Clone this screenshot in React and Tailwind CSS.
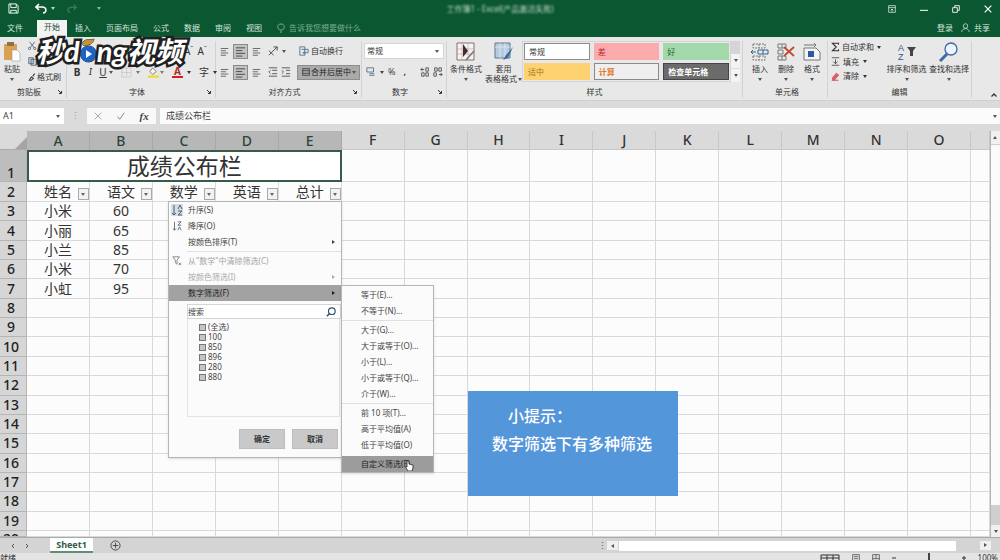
/**
 * App.jsx
 * Spreadsheet window: ribbon, formula bar, sheet grid and the open filter menu.
 */

import React from 'react'

const COLUMNS = ['A', 'B', 'C', 'D', 'E', 'F', 'G', 'H', 'I', 'J', 'K', 'L', 'M', 'N', 'O', '']
const HEADINGS = ['姓名', '语文', '数学', '英语', '总计']
const SCORES = [
  ['小米', '60'],
  ['小丽', '65'],
  ['小兰', '85'],
  ['小米', '70'],
  ['小虹', '95'],
]
const ROWS = Array.from({ length: 18 }, (_, i) => i + 3)
const TABS = ['插入', '页面布局', '公式', '数据', '审阅', '视图']
const FILTER_VALUES = ['100', '850', '896', '280', '880']

const SUBMENU = [
  ['等于(E)...', '不等于(N)...'],
  ['大于(G)...', '大于或等于(O)...', '小于(L)...', '小于或等于(Q)...', '介于(W)...'],
  ['前 10 项(T)...', '高于平均值(A)', '低于平均值(O)'],
]

function Caret({ className = 'text-[#555]' }) {
  return (
    <svg viewBox="0 0 4 3" className={`w-1 h-[3px] shrink-0 ${className}`}>
      <path d="M0 0h4L2 3z" fill="currentColor" />
    </svg>
  )
}

function Icon({ children, className = 'w-3 h-3', box = '0 0 12 12' }) {
  return (
    <svg viewBox={box} className={`shrink-0 ${className}`} fill="none" stroke="currentColor" strokeWidth="1">
      {children}
    </svg>
  )
}

/* Ribbon section with its caption underneath */
function Group({ label, launcher, className, children }) {
  return (
    <section className={`flex flex-col shrink-0 border-r border-[#d2d2d2] ${className}`}>
      <div className="flex h-11">{children}</div>
      <div className="flex items-center h-3 mt-px">
        <span className="flex-1 text-center">{label}</span>
        {launcher && (
          <Icon className="w-1 h-1 mr-1" box="0 0 4 4">
            <path d="M0 0l3 3M3.5 1v2.5H1" />
          </Icon>
        )}
      </div>
    </section>
  )
}

function BigButton({ lines, className, children }) {
  return (
    <button className={`flex flex-col items-center shrink-0 ${className}`}>
      <span className="flex items-center justify-center h-[22px]">{children}</span>
      <span className="h-[10px] mt-px whitespace-nowrap">{lines[0]}</span>
      <span className="flex items-center gap-px h-[10px] whitespace-nowrap">{lines[1]}<Caret /></span>
    </button>
  )
}

function AlignIcon({ active, small }) {
  return (
    <button className={active ? 'bg-[#c3c3c3] border border-[#8a8a8a] p-px' : 'p-px'}>
      <Icon className={small ? 'w-[9px] h-[9px]' : 'w-[11px] h-[11px]'}>
        <path d="M1 2h10M1 5h7M1 8h10M1 11h7" />
      </Icon>
    </button>
  )
}

function TitleBar() {
  return (
    <header className="flex items-center h-[18px] pb-px text-white">
      <div className="flex flex-1 items-center pl-2">
        <Icon className="w-[11px] h-[11px]">
          <path d="M1 1h8l2 2v8H1zM3 1v4h6V1M3 11V8h6v3" />
        </Icon>
        <Icon className="w-3 h-3 ml-4">
          <path d="M4 1L1 4l3 3M1 4h6c5 0 5 6 1 6" strokeWidth="1.6" />
        </Icon>
        <Caret className="ml-1 text-[#b9d2c5]" />
        <Icon className="w-[10px] h-[10px] ml-3 opacity-20">
          <path d="M8 1l3 3-3 3M11 4H5C0 4 0 10 4 10" strokeWidth="1.6" />
        </Icon>
        <Caret className="ml-5 text-[#8db39f]" />
      </div>
      <span className="text-[8px] leading-3 text-[#c4dbce] blur-[1px]">工作簿1 - Excel(产品激活失败)</span>
      <div className="flex flex-1 items-center justify-end gap-5 pr-2">
        <Icon className="w-2 h-2"><path d="M1 1h10v10H1zM1 4h10M6 10V6M4 8l2-2 2 2" /></Icon>
        <Icon className="w-2 h-2 ml-1"><path d="M0 8h12" strokeWidth="1.5" /></Icon>
        <Icon className="w-2 h-2 ml-1"><path d="M1 4h7v7H1zM4 4V1h7v7H8" strokeWidth="1.3" /></Icon>
        <Icon className="w-2 h-2 ml-1"><path d="M1 1l10 10M11 1L1 11" strokeWidth="1.8" /></Icon>
      </div>
    </header>
  )
}

function Tabs() {
  return (
    <nav className="flex h-[19px] text-[8px] leading-[18px] text-[#d5e5dc]">
      <button className="w-[37px] pl-[7px] text-left">文件</button>
      <button className="px-[7px] mt-[2px] pb-1 bg-[#f3f3f3] text-[#174f34] leading-3">开始</button>
      <div className="flex gap-px pl-px">
        {TABS.map((tab) => (
          <button key={tab} className="px-[7px]">{tab}</button>
        ))}
      </div>
      <button className="flex items-center gap-1 ml-2 text-[#7fae95]">
        <Icon className="w-2 h-[10px]" box="0 0 8 10">
          <path d="M2.5 7C0 5 0 1 4 1s4 4 1.500 6zM3 9h2" />
        </Icon>
        告诉我您想要做什么
      </button>
      <div className="flex items-center ml-auto pr-[10px]">
        <button>登录</button>
        <button className="flex items-center gap-1 ml-2">
          <Icon className="w-[9px] h-[9px]">
            <circle cx="6" cy="4" r="3" />
            <path d="M1 12c0-6 10-6 10 0" />
          </Icon>
          共享
        </button>
      </div>
    </nav>
  )
}

function ClipboardGroup() {
  return (
    <Group label="剪贴板" launcher className="w-[67px]">
      <BigButton lines={['粘贴']} className="w-6">
        <svg viewBox="0 0 18 22" className="w-[18px] h-[22px]">
          <rect x="1" y="3" width="13" height="16" rx="1" fill="#dba052" />
          <rect x="4" y="1" width="7" height="4" fill="#8a7350" />
          <path d="M9 9h5l3 3v8H9z" fill="#fff" stroke="#999" strokeWidth=".6" />
        </svg>
      </BigButton>
      <div className="flex flex-col justify-between pl-1 pb-[3px] text-[#3f5368]">
        <Icon className="w-[9px] h-[9px]"><path d="M2 1l6 8M9 1L3 9" /><circle cx="2" cy="10" r="1.500" /><circle cx="9" cy="10" r="1.500" /></Icon>
        <Icon className="w-[9px] h-[9px]"><path d="M1 1h6v8H1zM4 3h7v8H4z" fill="#c9d6e2" /></Icon>
        <button className="flex items-center gap-px text-[#333]">
          <Icon className="w-2 h-2"><path d="M2 11l3-5 3 2-3 3zM7 5l3-4" strokeWidth="1.600" /></Icon>
          格式刷
        </button>
      </div>
    </Group>
  )
}

function FontGroup() {
  return (
    <Group label="字体" launcher className="w-[149px]">
      <div className="flex flex-col flex-1 pl-[3px]">
        <div className="flex items-center justify-end gap-1 h-5 pr-[10px] text-[10px]">
          <button>A<sup>ˆ</sup></button>
          <button>A<sup>ˇ</sup></button>
        </div>
        <div className="flex items-center h-[22px] text-[10px]">
          <button className="w-[14px] font-bold">B</button>
          <button className="w-[13px] italic font-serif">I</button>
          <button className="w-3 underline">U</button>
          <Caret />
          <Icon className="w-[11px] h-[11px] ml-2 text-[#b0b0b0]"><path d="M1 1h10v10H1zM6 1v10M1 6h10" strokeDasharray="1 1" /></Icon>
          <Caret className="ml-1 text-[#777]" />
          <svg viewBox="0 0 12 12" className="w-[11px] h-[11px] ml-2">
            <path d="M5 1l4 4-4 3-3-3z" fill="#fff" stroke="#555" strokeWidth=".8" />
            <rect y="9" width="12" height="3" fill="#f0dc4a" />
          </svg>
          <Caret className="ml-px text-[#777]" />
          <button className="w-[11px] ml-2 h-[11px] leading-[9px] font-bold border-b-2 border-[#d02020] text-[#b02a2a]">A</button>
          <Caret className="ml-1" />
          <button className="ml-2">字</button>
          <Caret className="ml-1" />
        </div>
      </div>
    </Group>
  )
}

function AlignmentGroup() {
  return (
    <Group label="对齐方式" launcher className="w-[146px]">
      <div className="flex flex-col flex-1 pl-[3px] text-[#444]">
        <div className="flex items-center gap-[3px] h-5">
          <AlignIcon small />
          <AlignIcon active />
          <AlignIcon small />
          <Icon className="w-[11px] h-[11px] ml-[3px]"><path d="M1 10l9-9M6 1h4v4M1 5l5 5" /></Icon>
          <Caret />
          <button className="flex items-center gap-[2px] ml-[10px] text-[#333]">
            <Icon className="w-[10px] h-[10px] text-[#456b8a]"><path d="M1 1h6v10H1zM3 4h8v4H5M7 6L5 8l2 2" /></Icon>
            自动换行
          </button>
        </div>
        <div className="flex items-center gap-[3px] h-[22px]">
          <AlignIcon small />
          <AlignIcon active />
          <AlignIcon small />
          <Icon className="w-[10px] h-[10px] ml-[3px]"><path d="M1 1h10M5 4h6M5 8h6M1 11h10M3 4L1 6l2 2" /></Icon>
          <Icon className="w-[10px] h-[10px]"><path d="M1 1h10M6 4h5M6 8h5M1 11h10M1 4l2 2-2 2" /></Icon>
          <button className="flex items-center justify-between h-[15px] w-[63px] pl-1 pr-[3px] ml-auto mr-px bg-[#aaaaaa] border border-[#8e8e8e] text-[#222]">
            <Icon className="w-2 h-2"><path d="M1 1h10v10H1zM1 4h10M1 8h10" /></Icon>
            合并后居中
            <Caret />
          </button>
        </div>
      </div>
    </Group>
  )
}

function NumberGroup() {
  return (
    <Group label="数字" launcher className="w-[85px]">
      <div className="flex flex-col flex-1 px-[2px]">
        <div className="flex items-center shrink-0 h-4 w-full mt-[2px] bg-white border border-[#d5d5d5] pr-1">
          <select aria-label="数字格式" className="flex-1 appearance-none outline-none pl-[2px]">
            <option>常规</option>
          </select>
          <Caret />
        </div>
        <div className="flex items-center h-[26px] pl-[2px] text-[9px] text-[#444]">
          <Icon className="w-[10px] h-[10px] text-[#456b8a]"><path d="M1 1h8v5H1zM4 8h6M4 10h6" /></Icon>
          <Caret className="ml-1" />
          <button className="ml-1">%</button>
          <button className="ml-2 font-bold">,</button>
          <Icon className="w-[10px] h-[10px] ml-[14px]"><path d="M5 3H1M3 1L1 3l2 2M7 1h3v4H7zM2 7h3v4H2zM7 7h3v4H7z" /></Icon>
          <Icon className="w-[10px] h-[10px] ml-[3px]"><path d="M7 9h4M9 7l2 2-2 2M1 7h3v4H1zM2 1h3v4H2zM7 1h3v4H7z" /></Icon>
        </div>
      </div>
    </Group>
  )
}

function StylesGroup() {
  return (
    <Group label="样式" className="w-[296px]">
      <BigButton lines={['条件格式']} className="w-[38px]">
        <svg viewBox="0 0 20 20" className="w-5 h-5">
          <path d="M1 1h17v17H1z" fill="#f8f2f2" stroke="#777" />
          <path d="M6 1v17M12 1v17M1 7h17M1 12h17" stroke="#c99" strokeWidth=".6" />
          <path d="M7 2l5 7-5 6z" fill="#333" />
          <path d="M10 18l8-9" stroke="#777" strokeWidth="1.500" />
        </svg>
      </BigButton>
      <BigButton lines={['套用', '表格格式']} className="w-[37px]">
        <svg viewBox="0 0 20 20" className="w-5 h-5">
          <path d="M1 1h15v15H1z" fill="#b7cbe0" stroke="#5f7890" />
          <path d="M1 5h15M6 1v15M11 1v15" stroke="#e8eef5" strokeWidth=".7" />
          <path d="M19 5l-7 8-3 5 5-2z" fill="#3e6a9c" />
        </svg>
      </BigButton>
      <div className="grid grid-cols-3 grid-rows-2 gap-x-1 gap-y-[3px] flex-1 h-[41px] p-px border border-[#d4d4d4] text-left [&>button]:pl-1 [&>button]:text-left">
        <button className="bg-white border border-[#8d8d8d] text-[#333]">常规</button>
        <button className="bg-[#fbabab] text-[#b8252c]">差</button>
        <button className="bg-[#a3d8ab] text-[#1c6b2c]">好</button>
        <button className="bg-[#ffd271] text-[#a9711a]">适中</button>
        <button className="bg-[#efefef] border border-[#8a8a8a] text-[#e07a2c] font-bold">计算</button>
        <button className="bg-[#6b6b6b] border border-[#444] text-white font-bold">检查单元格</button>
      </div>
      <div className="flex flex-col w-[9px] h-[41px] mr-[2px] bg-[#f3f3f3]">
        <span className="flex-1 bg-[#d8d3d8]" />
        <button className="flex flex-1 items-center justify-center" aria-label="向下"><Caret /></button>
        <button className="flex flex-1 items-center justify-center border-t border-[#ddd]" aria-label="更多"><Caret /></button>
      </div>
    </Group>
  )
}

function CellsGroup() {
  return (
    <Group label="单元格" className="w-[85px] pl-1">
      <BigButton lines={['插入']} className="w-[26px]">
        <Icon className="w-[18px] h-[18px] text-[#777]" box="0 0 18 18">
          <path d="M2 1h12v4H2zM8 1v4M2 13h12v4H2zM8 13v4" strokeDasharray="2 1" />
          <path d="M7 7h10v4H7zM12 7v4M5 9H0M2 7L0 9l2 2" stroke="#35608c" />
        </Icon>
      </BigButton>
      <BigButton lines={['删除']} className="w-[26px]">
        <Icon className="w-[18px] h-[18px] text-[#777]" box="0 0 18 18">
          <path d="M1 1h8v4H1zM5 1v4M1 7h5v4H1zM1 13h8v4H1zM5 13v4" />
          <path d="M7 4l10 9M17 4L7 13" stroke="#bd4a33" strokeWidth="1.800" />
        </Icon>
      </BigButton>
      <BigButton lines={['格式']} className="w-[26px]">
        <Icon className="w-[18px] h-[18px] text-[#777]" box="0 0 18 18">
          <path d="M1 2h12M11 0l2 2-2 2M1 5h12l4 4v8H1z" fill="#f4f4f4" />
          <path d="M5 8h6v6H5z" fill="#2c5aa0" stroke="none" />
        </Icon>
      </BigButton>
    </Group>
  )
}

function EditingGroup() {
  return (
    <Group label="编辑" className="w-[144px]">
      <div className="flex flex-col justify-between pl-[3px] pb-[3px] w-[57px]">
        <button className="flex items-center gap-[2px] h-3">
          <Icon className="w-[9px] h-[10px]"><path d="M10 3V1H2l5 5-5 5h8V9" strokeWidth="1.500" /></Icon>
          自动求和<Caret className="ml-px" />
        </button>
        <button className="flex items-center gap-[3px] h-3">
          <Icon className="w-[9px] h-[9px]"><path d="M1 1h10M1 11h10M6 3v6M3 6l3 3 3-3" /></Icon>
          填充<Caret className="ml-px" />
        </button>
        <button className="flex items-center gap-[3px] h-3">
          <svg viewBox="0 0 12 12" className="w-[9px] h-[9px]">
            <path d="M1 8l6-7 4 3-6 7H2z" fill="#d85f6c" />
            <path d="M1 11h9" stroke="#a33" />
          </svg>
          清除<Caret className="ml-px" />
        </button>
      </div>
      <BigButton lines={['排序和筛选']} className="w-[43px]">
        <svg viewBox="0 0 20 18" className="w-5 h-[18px] text-[#33558b]">
          <text x="1" y="8" fontSize="9" fontFamily="Liberation Sans" fill="currentColor">A</text>
          <text x="1" y="17" fontSize="9" fontFamily="Liberation Sans" fill="currentColor">Z</text>
          <path d="M10 4h9l-3 4v5h-3V8z" fill="#444" />
        </svg>
      </BigButton>
      <BigButton lines={['查找和选择']} className="w-[42px]">
        <Icon className="w-5 h-5 text-[#3c6aa6]" box="0 0 20 20">
          <circle cx="12" cy="7" r="6" fill="#eef4fb" strokeWidth="1.300" />
          <path d="M8 12l-7 7" strokeWidth="3" />
        </Icon>
      </BigButton>
    </Group>
  )
}

function Ribbon() {
  return (
    <div className="flex h-[63px] pt-1 pb-[2px] overflow-hidden bg-[#e8e8e8] text-[8px] leading-[10px] text-[#333]">
      <ClipboardGroup />
      <FontGroup />
      <AlignmentGroup />
      <NumberGroup />
      <StylesGroup />
      <CellsGroup />
      <EditingGroup />
      <button className="ml-auto mt-auto mr-[3px]" aria-label="折叠功能区">
        <Icon className="w-[6px] h-[6px]"><path d="M1 9l5-5 5 5" strokeWidth="2.500" /></Icon>
      </button>
    </div>
  )
}

function FormulaBar() {
  return (
    <div className="flex items-center h-[31px] bg-[#dbdbdb] text-[9px] text-[#444] border-t border-[#d0d0d0]">
      <div className="flex items-center w-16 h-4 bg-white pr-[2px]">
        <input aria-label="名称框" defaultValue="A1" className="w-14 pl-[3px] outline-none" />
        <Caret />
      </div>
      <span className="w-[23px] text-center text-[#999]">⋮</span>
      <div className="flex items-center justify-around w-[69px] h-4 bg-[#f8f8f8]">
        <Icon className="w-2 h-2 text-[#aaa]"><path d="M1 1l10 10M11 1L1 11" strokeWidth="1.500" /></Icon>
        <Icon className="w-2 h-2 text-[#888]"><path d="M1 7l3 4 7-10" strokeWidth="1.500" /></Icon>
        <button className="font-[Liberation_Serif] italic font-bold text-[11px] leading-4">fx</button>
      </div>
      <div className="flex items-center flex-1 h-4 ml-1 bg-[#fbfbfb] pr-[3px]">
        <input aria-label="编辑栏" defaultValue="成绩公布栏" className="flex-1 pl-[6px] outline-none" />
        <Caret />
      </div>
    </div>
  )
}

function RowHeader({ className = 'items-center bg-[#d6d6d6]', children }) {
  return (
    <th
      scope="row"
      className={`flex justify-center min-h-0 pr-1 overflow-hidden font-medium text-[14px] leading-4 text-[#222] border-b border-r border-[#b5b5b5] ${className}`}
    >
      {children}
    </th>
  )
}

const CELL = 'flex items-center justify-center min-h-0 overflow-hidden border-b border-r border-[#d9d9d9]'

function Sheet() {
  return (
    <table className="grid flex-1 h-full grid-cols-[27px_repeat(15,minmax(0,1fr))_19px] grid-rows-[19px_32px_20px_repeat(17,minmax(0,1fr))_6px] bg-[#fcfcfc] text-[14px] leading-4 text-[#333]">
      <thead className="contents">
        <tr className="contents">
          <th className="flex items-end justify-end bg-[#dadada] border-b border-[#aaa]">
            <svg viewBox="0 0 12 12" className="w-3 h-3"><path d="M12 0v12H0z" fill="#a5a5a5" /></svg>
          </th>
          {COLUMNS.map((col, i) => (
            <th
              key={i}
              scope="col"
              className={`flex items-center justify-center font-medium border-r ${i < 5 ? 'bg-[#b7b7b7] border-[#a8a8a8] text-[#2b4638]' : 'bg-[#dadada] border-[#c8c8c8] text-[#333] border-b'}`}
            >
              {col}
            </th>
          ))}
        </tr>
      </thead>
      <tbody className="contents">
        <tr className="contents">
          <RowHeader className="items-end bg-[#bdbdbd]">1</RowHeader>
          <td className="flex items-center justify-center col-span-5 border-2 border-[#3a5a49] bg-white text-[23px] leading-7">
            成绩公布栏
          </td>
          {COLUMNS.slice(5).map((_, i) => <td key={i} className={CELL} />)}
        </tr>
        <tr className="contents">
          <RowHeader>2</RowHeader>
          {HEADINGS.map((name) => (
            <td key={name} className={`relative ${CELL}`}>
              {name}
              <button aria-label={`筛选${name}`} className="absolute right-0 bottom-px flex items-center justify-center w-[11px] h-3 bg-[#f2f2f2] border border-[#aaa]">
                <Caret className="text-[#666]" />
              </button>
            </td>
          ))}
          {COLUMNS.slice(5).map((_, i) => <td key={i} className={CELL} />)}
        </tr>
        {ROWS.map((row, r) => (
          <tr key={row} className="contents">
            <RowHeader className={row === 20 ? 'items-start bg-[#d6d6d6]' : undefined}>{row}</RowHeader>
            {COLUMNS.map((_, c) => <td key={c} className={CELL}>{SCORES[r]?.[c]}</td>)}
          </tr>
        ))}
      </tbody>
    </table>
  )
}

function MenuItem({ icon, arrow, className = 'text-[#444]', children }) {
  return (
    <button className={`flex items-center shrink-0 w-full h-4 pr-[6px] text-left ${className}`}>
      <span className="flex justify-center w-[19px] pr-[3px]">{icon}</span>
      <span className="flex-1">{children}</span>
      {arrow && (
        <svg viewBox="0 0 3 4" className="w-[3px] h-1"><path d="M0 0v4l3-2z" fill="currentColor" /></svg>
      )}
    </button>
  )
}

function FilterMenu() {
  return (
    <div className="absolute left-[168px] top-[70px] w-[174px] h-[257px] flex flex-col bg-[#fbfbfb] border border-[#b5b5b5] shadow-sm text-[8px] leading-[10px]">
      <MenuItem icon={<Icon className="w-3 h-3 bg-[#d5dde4] text-[#4a5f73]"><path d="M3 1v10M1 9l2 2 2-2M7 5l2-4 2 4M7 7h4l-4 4h4" /></Icon>}>升序(S)</MenuItem>
      <MenuItem icon={<Icon className="w-[10px] h-[10px] text-[#4a5f73]"><path d="M3 1v10M1 9l2 2 2-2M7 1h4L7 5h4M7 11l2-4 2 4" /></Icon>}>降序(O)</MenuItem>
      <MenuItem arrow>按颜色排序(T)</MenuItem>
      <hr className="ml-[18px] my-px border-[#e2e2e2]" />
      <MenuItem className="text-[#a5a5a5]" icon={<Icon className="w-[10px] h-[10px] text-[#777]"><path d="M1 1h8L6 5v5L4 8V5zM8 8l3 3M11 8l-3 3" /></Icon>}>从"数学"中清除筛选(C)</MenuItem>
      <MenuItem arrow className="text-[#ababab]">按颜色筛选(I)</MenuItem>
      <MenuItem arrow className="bg-[#a2a2a2] text-[#1f1f1f]">数字筛选(F)</MenuItem>
      <div className="flex items-center shrink-0 h-[15px] mt-[3px] ml-[18px] pr-1 bg-white border border-[#d5d5d5]">
        <input aria-label="搜索" placeholder="搜索" className="flex-1 min-w-0 outline-none placeholder:text-[#444]" />
        <Icon className="w-[10px] h-[10px] text-[#35506e]"><circle cx="7" cy="5" r="4" strokeWidth="1.400" /><path d="M4 8l-3 3" strokeWidth="1.800" /></Icon>
      </div>
      <div className="flex flex-col flex-1 ml-[18px] mr-px pl-[11px] pt-[3px] border border-t-0 border-[#e3e3e3] text-[#444]">
        {['(全选)', ...FILTER_VALUES].map((value) => (
          <label key={value} className="flex items-center gap-[2px] h-[10px]">
            <input type="checkbox" defaultChecked className="appearance-none w-[7px] h-[7px] border border-[#777] checked:bg-[#c5c5c5]" />
            {value}
          </label>
        ))}
      </div>
      <div className="flex justify-end gap-[7px] mt-3 mb-2 mr-[3px]">
        <button className="w-[46px] h-5 bg-[#c9c9c9] border border-[#bdbdbd] font-bold text-[#333]">确定</button>
        <button className="w-[46px] h-5 bg-[#c9c9c9] border border-[#bdbdbd] font-bold text-[#333]">取消</button>
      </div>
    </div>
  )
}

function NumberFilterMenu() {
  return (
    <div className="absolute left-[341px] top-[154px] w-[93px] pt-px bg-[#fbfbfb] border border-[#b5b5b5] shadow-sm text-[8px] leading-[10px] text-[#444]">
      {SUBMENU.map((items, i) => (
        <div key={i} className="pb-px mb-px border-b border-[#e0e0e0] last-of-type:border-[#fbfbfb]">
          {items.map((item) => (
            <button key={item} className="block w-full h-4 pl-[19px] text-left">{item}</button>
          ))}
        </div>
      ))}
      <button className="relative block w-full h-4 pl-[19px] text-left bg-[#9c9c9c] text-[#1f1f1f]">
        自定义筛选(F)
        <svg viewBox="0 0 9 11" className="absolute left-[63px] top-1 w-[9px] h-[11px]">
          <path d="M2 1v6L1 6v2l2 3h4l1-3V5L4 4V1z" fill="#fff" stroke="#222" strokeWidth=".8" />
        </svg>
      </button>
    </div>
  )
}

function VerticalScroll() {
  return (
    <div className="flex flex-col w-[10px] shrink-0 border-l border-[#b5b5b5] bg-[#cfcfcf]">
      <button className="flex items-center justify-center h-[13px] bg-[#f0f0f0] rotate-180" aria-label="向上滚动"><Caret /></button>
      <span className="flex-1 mt-px bg-[#fbfbfb]" />
      <span className="h-5" />
      <button className="flex items-center justify-center h-3 bg-[#f0f0f0]" aria-label="向下滚动"><Caret /></button>
    </div>
  )
}

function SheetBar() {
  return (
    <div className="flex items-center h-4 shrink-0 border-t border-[#aaa] bg-[#d4d4d4] text-[9px] text-[#555]">
      <div className="flex items-center gap-[10px] w-[50px] pl-[11px]">
        <Icon className="w-1 h-1" box="0 0 4 4"><path d="M3 0L1 2l2 2" /></Icon>
        <Icon className="w-1 h-1" box="0 0 4 4"><path d="M1 0l2 2-2 2" /></Icon>
      </div>
      <button className="w-[43px] h-[15px] bg-white border-b-2 border-[#5c9076] font-bold text-[#315c46]">Sheet1</button>
      <button aria-label="新工作表" className="ml-[17px]">
        <Icon className="w-[11px] h-[11px] text-[#444]"><circle cx="6" cy="6" r="5" /><path d="M6 3v6M3 6h6" /></Icon>
      </button>
      <div className="flex items-center w-[402px] ml-auto pr-[10px]">
        <span className="w-[10px]">⋮</span>
        <button className="w-[9px] h-[11px] bg-[#f0f0f0] flex items-center justify-center rotate-90" aria-label="向左滚动"><Caret /></button>
        <span className="flex-1 h-[10px] ml-[2px] mr-[25px] bg-white" />
        <button className="w-[9px] h-[11px] bg-[#f0f0f0] flex items-center justify-center -rotate-90" aria-label="向右滚动"><Caret /></button>
      </div>
    </div>
  )
}

function StatusBar() {
  return (
    <footer className="flex h-[7px] shrink-0 overflow-hidden bg-[#e4e4e4] text-[8px] leading-[10px] text-[#333]">
      <span>就绪</span>
      <div className="flex ml-auto gap-3 pr-[2px]">
        <Icon className="w-5 h-2 mt-px" box="0 0 20 8"><path d="M1 1h18v8H1zM7 1v8M13 1v8M1 4h18" /></Icon>
        <Icon className="w-2 h-2 mt-px"><path d="M1 1h10v12H1zM3 4h6M3 7h6" /></Icon>
        <Icon className="w-2 h-2 mt-px"><path d="M1 1h10v12H1zM6 1v6M1 7h10" /></Icon>
        <Icon className="w-1 h-2" box="0 0 4 8"><path d="M0 5h4" /></Icon>
        <span className="w-[2px] h-2 mx-5 bg-[#444]" />
        <Icon className="w-1 h-2" box="0 0 4 8"><path d="M0 5h4M2 3v4" /></Icon>
        <span>100%</span>
      </div>
    </footer>
  )
}

/* Channel logo laid over the top left corner */
function Watermark() {
  return (
    <div className="absolute left-[36px] top-[35px] flex items-center h-8 italic font-bold text-[28px] leading-8 text-white [-webkit-text-stroke:5px_#202020] [paint-order:stroke_fill] pointer-events-none">
      <span>秒</span>
      <span className="font-[Lato] text-[29px]">d</span>
      <svg viewBox="0 0 17 26" className="w-[17px] h-[26px]">
        <path d="M3 4c4-4 7-1 11-3-1 5-6 7-11 6z" fill="#c8922c" stroke="#202020" />
        <circle cx="8.500" cy="16" r="8" fill="#1d64c8" stroke="#202020" />
        <path d="M6 12l6 4-6 4z" fill="#fff" />
      </svg>
      <span className="font-[Lato] text-[29px]">ng</span>
      <span>视频</span>
    </div>
  )
}

export default function App() {
  return (
    <div className="relative flex flex-col h-screen overflow-hidden font-['Noto_Sans','Noto_Sans_CJK_SC',sans-serif]">
      <div className="bg-[#0b5731]">
        <TitleBar />
        <Tabs />
      </div>
      <Ribbon />
      <FormulaBar />
      <main className="relative flex flex-1 min-h-0">
        <Sheet />
        <VerticalScroll />
        <FilterMenu />
        <NumberFilterMenu />
        <aside className="absolute left-[468px] top-[260px] w-[210px] h-[105px] pt-[11px] pl-6 bg-[#5496da] text-[16px] leading-7 font-medium text-white whitespace-nowrap">
          <p className="pl-4">小提示：</p>
          <p>数字筛选下有多种筛选</p>
        </aside>
      </main>
      <SheetBar />
      <StatusBar />
      <Watermark />
    </div>
  )
}
